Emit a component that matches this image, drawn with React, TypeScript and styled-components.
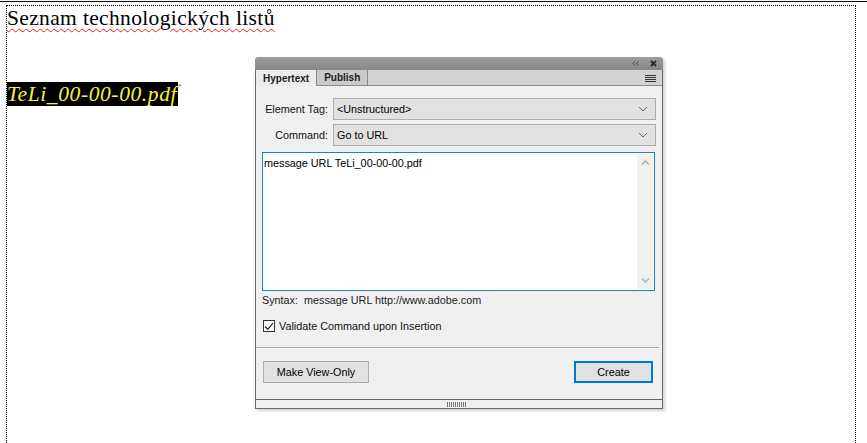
import React from 'react';
import styled, { createGlobalStyle } from 'styled-components';

const GlobalStyle = createGlobalStyle`
  html, body {
    margin: 0;
    padding: 0;
    background: #fff;
    overflow: hidden;
  }
`;

const ui = `"Liberation Sans", Arial, sans-serif`;

const Page = styled.div`
  position: relative;
  width: 867px;
  height: 443px;
  padding-top: 1px;
  box-sizing: border-box;
`;

const TopRule = styled.div`
  height: 1px;
  background: #000;
`;

const Frame = styled.div`
  margin: 3px 0 0 6px;
  width: 850px;
  height: 440px;
  box-sizing: border-box;
  border: 1px dotted #000;
  border-bottom: none;
`;

const Heading = styled.h1`
  margin: 0;
  font: 400 21.5px/24px "Liberation Serif", "Times New Roman", serif;
  letter-spacing: 0.35px;
  color: #000;
  text-decoration: underline wavy #e02020;
  text-decoration-thickness: 1px;
  text-underline-offset: 3px;
  display: inline-block;
`;

const LinkRow = styled.div`
  margin-top: 52px;
  display: flex;
  align-items: flex-start;
`;

const LinkLabel = styled.span`
  background: #000;
  color: #f4f43c;
  font: italic 400 21.5px/24px "Liberation Serif", "Times New Roman", serif;
  letter-spacing: 0.6px;
  padding-right: 1px;
`;

const Anchor = styled.span`
  color: #2040ff;
  font: 400 11px/10px ${ui};
  margin-top: 2px;
`;

/* floating palette window over the document */
const Panel = styled.div`
  position: absolute;
  left: 255px;
  top: 57px;
  width: 408px;
  height: 352px;
  box-sizing: border-box;
  display: flex;
  flex-direction: column;
  border: 1px solid #6a6a6a;
  border-top: none;
  border-radius: 4px 4px 0 0;
  background: #f0f0f0;
  box-shadow: 2px 2px 3px rgba(0, 0, 0, 0.18);
  font-family: ${ui};
`;

const TitleBar = styled.div`
  height: 13px;
  margin: 0 -1px;
  border-radius: 4px 4px 0 0;
  background: linear-gradient(#9d9d9d, #878787);
  display: flex;
  align-items: center;
  justify-content: flex-end;
  gap: 11px;
  padding-right: 6px;
`;

const TabStrip = styled.div`
  height: 16px;
  display: flex;
  background: #d2d2d2;
  box-shadow: inset 0 -1px 0 #8a8a8a;
`;

const Tab = styled.div<{ $active?: boolean }>`
  display: flex;
  align-items: center;
  padding: 0 7px;
  font-size: 10px;
  font-weight: 700;
  color: #222;
  background: ${(p) => (p.$active ? '#ececec' : '#cacaca')};
  border-right: 1px solid #8a8a8a;
  border-bottom: ${(p) => (p.$active ? 'none' : '1px solid #8a8a8a')};
  box-sizing: border-box;
`;

const TabFill = styled.div`
  flex: 1;
  display: flex;
  align-items: center;
  justify-content: flex-end;
  padding-right: 6px;
`;

const Body = styled.div`
  flex: 1;
  display: flex;
  flex-direction: column;
  padding: 12px 7px 0 6px;
  font-size: 10.8px;
  color: #1a1a1a;
`;

const FieldGrid = styled.div`
  display: grid;
  grid-template-columns: 66px 1fr;
  column-gap: 5px;
  row-gap: 4px;
  align-items: center;
`;

const Label = styled.span`
  text-align: right;
  white-space: nowrap;
  font-size: 10.8px;
  color: #111;
`;

const Select = styled.div`
  height: 22px;
  box-sizing: border-box;
  border: 1px solid #adadad;
  background: #e1e1e1;
  display: flex;
  align-items: center;
  justify-content: space-between;
  padding: 0 7px 0 3px;
  font-size: 10.8px;
  color: #000;
  margin-right: -1px;
`;

const Editor = styled.div`
  margin-top: 6px;
  height: 139px;
  box-sizing: border-box;
  border: 1px solid #1d84c4;
  background: #fff;
  display: flex;
`;

const EditorText = styled.div`
  flex: 1;
  padding: 4px 1px;
  font-size: 10.8px;
  color: #000;
`;

const ScrollTrack = styled.div`
  width: 16px;
  margin: 1px 1px 1px 0;
  background: #f0f0f0;
  display: flex;
  flex-direction: column;
  justify-content: space-between;
  align-items: center;
  padding: 6px 0;
  box-sizing: border-box;
`;

const Syntax = styled.div`
  margin-top: 2px;
  line-height: 15px;
  font-size: 10.8px;
  color: #222;
  white-space: pre;
`;

const CheckRow = styled.label`
  margin-top: 12px;
  display: flex;
  align-items: center;
  gap: 4px;
  font-size: 10.8px;
  color: #111;
  padding-left: 1px;
`;

const CheckBox = styled.span`
  width: 12px;
  height: 12px;
  box-sizing: border-box;
  border: 1px solid #333;
  background: #fff;
  display: flex;
  align-items: center;
  justify-content: center;
`;

const Separator = styled.div`
  margin: 15px -4px 0 -6px;
  height: 1px;
  background: #a8a8a8;
  box-shadow: 0 1px 0 #fff;
`;

const ButtonRow = styled.div`
  margin-top: 13px;
  display: flex;
  justify-content: space-between;
  padding: 0 2px 0 1px;
`;

const Button = styled.button<{ $primary?: boolean }>`
  height: 22px;
  box-sizing: border-box;
  font: 400 10.8px ${ui};
  color: #000;
  background: #e1e1e1;
  border: ${(p) => (p.$primary ? '2px solid #0078d7' : '1px solid #adadad')};
  width: ${(p) => (p.$primary ? '79px' : '106px')};
  padding: 0;
`;

const Gripper = styled.div`
  height: 8px;
  border-top: 1px solid #666;
  display: flex;
  align-items: center;
  justify-content: center;
  padding-right: 6px;
`;

const Chevron = () => (
  <svg width="10" height="6" viewBox="0 0 10 6">
    <path d="M1 1 L5 5 L9 1" fill="none" stroke="#6a6a6a" strokeWidth="1" />
  </svg>
);

const ArrowUp = () => (
  <svg width="9" height="5" viewBox="0 0 9 5">
    <path d="M1 4.5 L4.5 1 L8 4.5" fill="none" stroke="#b0b0b0" strokeWidth="1.3" />
  </svg>
);

const ArrowDown = () => (
  <svg width="9" height="5" viewBox="0 0 9 5">
    <path d="M1 0.5 L4.5 4 L8 0.5" fill="none" stroke="#b0b0b0" strokeWidth="1.3" />
  </svg>
);

const Collapse = () => (
  <svg width="7" height="5" viewBox="0 0 7 5">
    <path d="M3 0.5 L0.8 2.5 L3 4.5 M6.5 0.5 L4.3 2.5 L6.5 4.5" fill="none" stroke="#444" strokeWidth="1" />
  </svg>
);

const Close = () => (
  <svg width="7" height="7" viewBox="0 0 7 7">
    <path d="M1 1 L6 6 M6 1 L1 6" stroke="#2a2a2a" strokeWidth="1.8" />
  </svg>
);

const Menu = () => (
  <svg width="11" height="7" viewBox="0 0 11 7" shapeRendering="crispEdges">
    {[0, 2, 4, 6].map((y) => (
      <rect key={y} x="0" y={y} width="11" height="1" fill="#333" />
    ))}
  </svg>
);

const Check = () => (
  <svg width="10" height="9" viewBox="0 0 10 9">
    <path d="M1 4.5 L3.8 7.3 L9 1.2" fill="none" stroke="#222" strokeWidth="1.2" />
  </svg>
);

const Grip = () => (
  <svg width="19" height="5" viewBox="0 0 19 5" shapeRendering="crispEdges">
    {Array.from({ length: 10 }, (_, i) => (
      <rect key={i} x={i * 2} y="0" width="1" height="5" fill="#777" />
    ))}
  </svg>
);

export default function App() {
  return (
    <>
      <GlobalStyle />
      <Page>
        <TopRule />
        <Frame>
          <Heading>Seznam technologických listů</Heading>
          <LinkRow>
            <LinkLabel>TeLi_00-00-00.pdf</LinkLabel>
            <Anchor>ˆ</Anchor>
          </LinkRow>
        </Frame>

        <Panel>
          <TitleBar>
            <Collapse />
            <Close />
          </TitleBar>
          <TabStrip>
            <Tab $active>Hypertext</Tab>
            <Tab>Publish</Tab>
            <TabFill>
              <Menu />
            </TabFill>
          </TabStrip>
          <Body>
            <FieldGrid>
              <Label>Element Tag:</Label>
              <Select>
                <span>&lt;Unstructured&gt;</span>
                <Chevron />
              </Select>
              <Label>Command:</Label>
              <Select>
                <span>Go to URL</span>
                <Chevron />
              </Select>
            </FieldGrid>
            <Editor>
              <EditorText>message URL TeLi_00-00-00.pdf</EditorText>
              <ScrollTrack>
                <ArrowUp />
                <ArrowDown />
              </ScrollTrack>
            </Editor>
            <Syntax>Syntax:  message URL http://www.adobe.com</Syntax>
            <CheckRow>
              <CheckBox>
                <Check />
              </CheckBox>
              Validate Command upon Insertion
            </CheckRow>
            <Separator />
            <ButtonRow>
              <Button>Make View-Only</Button>
              <Button $primary>Create</Button>
            </ButtonRow>
          </Body>
          <Gripper>
            <Grip />
          </Gripper>
        </Panel>
      </Page>
    </>
  );
}
